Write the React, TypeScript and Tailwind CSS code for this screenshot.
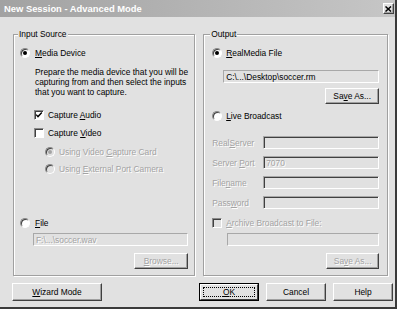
import type { ReactNode } from "react";

const dis = "text-[#a3a3a3] [text-shadow:1px_1px_0_#ffffff]";

function Radio({ checked, disabled }: { checked?: boolean; disabled?: boolean }) {
  return (
    <span
      className={`flex h-[10px] w-[10px] shrink-0 items-center justify-center rounded-full border border-t-[#8a8a8a] border-l-[#8a8a8a] border-r-white border-b-white shadow-[inset_1px_1px_0_#404040] ${
        disabled ? "bg-[#e1e1e1]" : "bg-white"
      }`}
    >
      {checked ? (
        <span className={`h-[4px] w-[4px] rounded-full ${disabled ? "bg-[#a3a3a3]" : "bg-black"}`} />
      ) : null}
    </span>
  );
}

function Check({ checked, disabled }: { checked?: boolean; disabled?: boolean }) {
  return (
    <span
      className={`flex h-[10px] w-[10px] shrink-0 items-center justify-center border border-t-[#8a8a8a] border-l-[#8a8a8a] border-r-white border-b-white shadow-[inset_1px_1px_0_#404040] ${
        disabled ? "bg-[#e1e1e1]" : "bg-white"
      }`}
    >
      {checked ? (
        <svg width="8" height="8" viewBox="0 0 8 8">
          <path d="M1.2 3.6 L3 5.6 L6.8 1.6" fill="none" stroke="#000" strokeWidth="1.4" />
        </svg>
      ) : null}
    </span>
  );
}

function Button({
  children,
  className = "",
  disabled,
}: {
  children: ReactNode;
  className?: string;
  disabled?: boolean;
}) {
  return (
    <div
      className={`flex items-center justify-center border border-t-white border-l-white border-r-[#404040] border-b-[#404040] bg-[#e1e1e1] shadow-[inset_-1px_-1px_0_#a0a0a0] ${
        disabled ? dis : ""
      } ${className}`}
    >
      {children}
    </div>
  );
}

function Field({
  children,
  className = "",
  dark,
}: {
  children?: ReactNode;
  className?: string;
  dark?: boolean;
}) {
  return (
    <div
      className={`flex h-[13px] items-center border border-t-[#a8a8a8] border-l-[#a8a8a8] border-r-white border-b-white bg-[#e1e1e1] pl-[2px] ${
        dark ? "shadow-[inset_1px_1px_0_#404040]" : ""
      } ${className}`}
    >
      {children}
    </div>
  );
}

function U({ children }: { children: ReactNode }) {
  return <span className="underline decoration-1 underline-offset-[1px]">{children}</span>;
}

function ServerRow({ label, value }: { label: ReactNode; value?: string }) {
  return (
    <div className="flex items-center">
      <span className={`w-[51px] ${dis}`}>{label}</span>
      <Field dark className="w-[116px]">
        <span className={dis}>{value}</span>
      </Field>
    </div>
  );
}

export default function App() {
  return (
    <div className="h-[310px] w-[399px] bg-white">
      <div className="flex h-[309px] w-[397px] flex-col border-r-2 border-b-2 border-[#3a3a3a] bg-[#e1e1e1] font-['Liberation_Sans',Arial,sans-serif] text-[8.4px] leading-[10px] whitespace-nowrap text-black">
        {/* title bar */}
        <div className="flex h-[17px] items-center justify-between bg-gradient-to-r from-[#a2a2a2] to-[#c6c6c6] pl-[4px] pr-[1px]">
          <span className="text-[9.4px] font-bold text-white">New Session - Advanced Mode</span>
          <div className="flex h-[11px] w-[11px] items-center justify-center border border-t-white border-l-white border-r-[#404040] border-b-[#404040] bg-[#e1e1e1] shadow-[inset_-1px_-1px_0_#a0a0a0]">
            <svg width="7" height="6" viewBox="0 0 7 6">
              <path d="M0.5 0.5 L6 5.5 M6 0.5 L0.5 5.5" stroke="#000" strokeWidth="1.5" />
            </svg>
          </div>
        </div>

        <div className="flex gap-[8px] pl-[13px] pt-[12px]">
          {/* Input Source */}
          <fieldset className="w-[182px] border border-[#a0a0a0] shadow-[inset_1px_1px_0_#ffffff,1px_1px_0_#ffffff]">
            <legend className="ml-[4px] bg-[#e1e1e1] px-[1px]">Input Source</legend>
            <div className="flex flex-col pl-[6px] pr-[6px] pb-[6px]">
              <div className="mt-[8px] flex h-[12px] items-center gap-[5px]">
                <Radio checked />
                <span>
                  <U>M</U>edia Device
                </span>
              </div>
              <div className="mt-[8px] ml-[15px]">
                Prepare the media device that you will be
                <br />
                capturing from and then select the inputs
                <br />
                that you want to capture.
              </div>
              <div className="mt-[12px] ml-[14px] flex h-[12px] items-center gap-[4px]">
                <Check checked />
                <span>
                  Capture <U>A</U>udio
                </span>
              </div>
              <div className="mt-[6px] ml-[14px] flex h-[12px] items-center gap-[4px]">
                <Check />
                <span>
                  Capture <U>V</U>ideo
                </span>
              </div>
              <div className="mt-[7px] ml-[25px] flex h-[12px] items-center gap-[4px]">
                <Radio checked disabled />
                <span className={dis}>
                  Using Video <U>C</U>apture Card
                </span>
              </div>
              <div className="mt-[5px] ml-[25px] flex h-[12px] items-center gap-[4px]">
                <Radio disabled />
                <span className={dis}>
                  Using <U>E</U>xternal Port Camera
                </span>
              </div>
              <div className="mt-[42px] flex h-[12px] items-center gap-[5px]">
                <Radio />
                <span>
                  <U>F</U>ile
                </span>
              </div>
              <Field className="mt-[4px] ml-[13px]">
                <span className={dis}>F:\...\soccer.wav</span>
              </Field>
              <Button disabled className="mt-[7px] h-[16px] w-[54px] self-end">
                <span>
                  <U>B</U>rowse...
                </span>
              </Button>
            </div>
          </fieldset>

          {/* Output */}
          <fieldset className="w-[185px] border border-[#a0a0a0] shadow-[inset_1px_1px_0_#ffffff,1px_1px_0_#ffffff]">
            <legend className="ml-[6px] bg-[#e1e1e1] px-[1px]">Output</legend>
            <div className="flex flex-col pl-[8px] pr-[8px] pb-[6px]">
              <div className="mt-[8px] flex h-[12px] items-center gap-[4px]">
                <Radio checked />
                <span>
                  <U>R</U>ealMedia File
                </span>
              </div>
              <Field className="mt-[11px] ml-[11px]">
                <span>C:\...\Desktop\soccer.rm</span>
              </Field>
              <Button className="mt-[5px] h-[16px] w-[54px] self-end">
                <span>
                  Sa<U>v</U>e As...
                </span>
              </Button>
              <div className="mt-[6px] flex h-[12px] items-center gap-[4px]">
                <Radio />
                <span>
                  <U>L</U>ive Broadcast
                </span>
              </div>
              <div className="mt-[14px] flex flex-col gap-[7px]">
                <ServerRow
                  label={
                    <>
                      Real<U>S</U>erver
                    </>
                  }
                />
                <ServerRow
                  label={
                    <>
                      Server <U>P</U>ort
                    </>
                  }
                  value="7070"
                />
                <ServerRow
                  label={
                    <>
                      File<U>n</U>ame
                    </>
                  }
                />
                <ServerRow
                  label={
                    <>
                      Pass<U>w</U>ord
                    </>
                  }
                />
              </div>
              <div className="mt-[8px] flex h-[12px] items-center gap-[4px]">
                <Check disabled />
                <span className={dis}>
                  <U>A</U>rchive Broadcast to File:
                </span>
              </div>
              <Field className="mt-[4px] ml-[15px]" />
              <Button disabled className="mt-[7px] h-[16px] w-[53px] self-end">
                <span>
                  Sa<U>v</U>e As...
                </span>
              </Button>
            </div>
          </fieldset>
        </div>

        {/* bottom buttons */}
        <div className="mt-[7px] flex items-center justify-between pl-[12px] pr-[2px]">
          <Button className="h-[18px] w-[90px]">
            <span>
              <U>W</U>izard Mode
            </span>
          </Button>
          <div className="flex gap-[7px]">
            <div className="h-[18px] w-[60px] border border-black">
              <div className="flex h-full w-full items-center justify-center border border-t-white border-l-white border-r-[#404040] border-b-[#404040] bg-[#e1e1e1] p-[2px]">
                <div className="flex h-full w-full items-center justify-center border border-dotted border-black">
                  <span>
                    <U>O</U>K
                  </span>
                </div>
              </div>
            </div>
            <Button className="h-[18px] w-[60px]">Cancel</Button>
            <Button className="h-[18px] w-[60px]">Help</Button>
          </div>
        </div>
      </div>
    </div>
  );
}
